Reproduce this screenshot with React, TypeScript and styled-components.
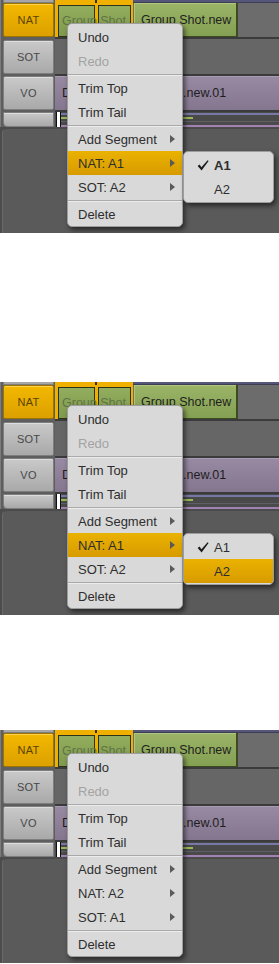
import React from "react";
import styled, { createGlobalStyle, css } from "styled-components";

const Global = createGlobalStyle`
  html, body { margin: 0; padding: 0; background: #ffffff; }
  body { font-family: "Liberation Sans", Arial, sans-serif; width: 279px; }
  * { box-sizing: border-box; }
`;

const Stack = styled.div`
  display: flex;
  flex-direction: column;
  width: 279px;
`;

const Panel = styled.section<{ $gap: number }>`
  position: relative;
  width: 279px;
  height: 233px;
  margin-top: ${(p) => p.$gap}px;
  background: #4c4c4c;
  overflow: hidden;
  display: flex;
  flex-direction: column;
`;

const Row = styled.div<{ $h: number }>`
  display: flex;
  height: ${(p) => p.$h}px;
  flex: none;
`;

const LabelCell = styled.div`
  width: 55px;
  flex: none;
  padding: 0 1px 0 2px;
  background: #5e5e5e;
  border-left: 1px solid #7c7c7c;
`;

const LabelButton = styled.div<{ $active?: boolean; $h: number; $mt?: number; $bottom?: boolean }>`
  height: ${(p) => p.$h}px;
  margin-top: ${(p) => p.$mt ?? 0}px;
  border-radius: ${(p) => (p.$bottom ? "0 0 0 4px" : "2px")};
  display: flex;
  align-items: center;
  justify-content: center;
  font-size: 11px;
  letter-spacing: 0.2px;
  ${(p) =>
    p.$active
      ? css`
          background: linear-gradient(#f3b800, #dca000);
          border: 1px solid #9c7400;
          box-shadow: inset 0 1px 0 #ffd24a;
          color: #5a4300;
        `
      : css`
          background: linear-gradient(#c9c9c9, #a9a9a9);
          border: 1px solid #7e7e7e;
          box-shadow: inset 0 1px 0 #dedede;
          color: #474747;
        `}
`;

const StripLabel = styled.div`
  height: 3px;
  background: #a6a6a6;
  border: 1px solid #7e7e7e;
  border-top: none;
`;

const TrackCell = styled.div<{ $bg: string; $sep?: boolean }>`
  flex: 1;
  display: flex;
  background: ${(p) => p.$bg};
  border-bottom: ${(p) => (p.$sep ? "2px solid #3b3b3b" : "none")};
  min-width: 0;
  overflow: hidden;
`;

const StripSel = styled.div`
  width: 78px;
  height: 3px;
  background: #f0b000;
  display: flex;
  justify-content: flex-start;
`;

const StripCut = styled.div`
  width: 2px;
  height: 3px;
  margin-left: 40px;
  background: #3a3000;
`;

const StripRest = styled.div`
  flex: 1;
  background: #56567a;
  border-bottom: 1px solid #3d3d55;
`;

const SelGroup = styled.div`
  width: 78px;
  flex: none;
  display: grid;
  grid-template-columns: 42px 36px;
  grid-template-rows: 34px;
  background: #f0b000;
`;

const SelClip = styled.div<{ $col: number }>`
  grid-row: 1;
  grid-column: ${(p) => p.$col};
  margin: 2px 2px 0 ${(p) => (p.$col === 1 ? 3 : 1)}px;
  background: linear-gradient(#93ad5e, #7f9a4c);
  border: 1px solid #2c3318;
`;

const SelText = styled.div`
  grid-row: 1;
  grid-column: 1 / span 2;
  z-index: 1;
  padding-left: 7px;
  padding-top: 2px;
  line-height: 32px;
  font-size: 12.5px;
  color: #5f7446;
  white-space: nowrap;
  overflow: hidden;
`;

const Clip = styled.div<{ $w: number; $color: "green" | "purple" }>`
  width: ${(p) => p.$w}px;
  flex: none;
  padding-left: 7px;
  font-size: 12.5px;
  line-height: 34px;
  white-space: nowrap;
  overflow: hidden;
  color: #1e1e1e;
  ${(p) =>
    p.$color === "green"
      ? css`
          margin-left: 1px;
          background: linear-gradient(#9bb468, #84a052);
          border-right: 2px solid #3e4a22;
          border-bottom: 1px solid #3e4a22;
          box-shadow: inset 1px 1px 0 #b0c680;
        `
      : css`
          background: linear-gradient(#978aa2, #85768f);
          box-shadow: inset 0 1px 0 #a89cb2;
        `}
`;

const VoText = styled.span`
  margin-left: 112px;
`;

const Lines = styled.div`
  flex: 1;
  display: flex;
  background: #4a4a4a;
`;

const Marker = styled.div`
  width: 5px;
  margin-left: 1px;
  background: #ffffff;
  border-left: 1px solid #111;
  border-right: 1px solid #111;
  flex: none;
`;

const LineStack = styled.div`
  flex: 1;
  display: flex;
  flex-direction: column;
  padding-top: 1px;
`;

const Line = styled.div<{ $c: string; $w?: number; $mt: number; $h?: number }>`
  height: ${(p) => p.$h ?? 2}px;
  width: ${(p) => (p.$w ? `${p.$w}px` : "100%")};
  margin-top: ${(p) => p.$mt}px;
  background: ${(p) => p.$c};
  flex: none;
`;

const DarkArea = styled.div`
  flex: 1;
  margin-top: 1px;
  margin-left: 2px;
  background: #5a5a5a;
  border-top-left-radius: 5px;
  border-left: 1px solid #6a6a6a;
  border-top: 1px solid #4a4a4a;
`;

const Menu = styled.div`
  position: absolute;
  left: 67px;
  top: 23px;
  width: 116px;
  padding-top: 1px;
  background: #d9d9d9;
  border: 1px solid #9d9d9d;
  border-radius: 5px;
  box-shadow: 2px 3px 5px rgba(0, 0, 0, 0.55);
  z-index: 5;
  overflow: hidden;
`;

const Item = styled.div<{ $disabled?: boolean; $hl?: boolean; $bold?: boolean; $pl?: number }>`
  height: 24px;
  display: flex;
  align-items: center;
  padding-left: ${(p) => p.$pl ?? 10}px;
  padding-right: 7px;
  font-size: 13px;
  font-weight: ${(p) => (p.$bold ? 700 : 400)};
  color: ${(p) => (p.$disabled ? "#a3a3a3" : "#2e2e2e")};
  background: ${(p) => (p.$hl ? "linear-gradient(#eab200, #d79b00)" : "transparent")};
  white-space: nowrap;
`;

const ItemLabel = styled.span`
  flex: 1;
`;

const Sep = styled.div`
  height: 3px;
  border-top: 1px solid transparent;
  display: flex;
  flex-direction: column;
  &::before {
    content: "";
    height: 1px;
    background: #a9a9a9;
  }
  &::after {
    content: "";
    height: 1px;
    background: #ececec;
  }
`;

const SubMenu = styled.div`
  position: absolute;
  left: 183px;
  top: 151px;
  width: 91px;
  padding: 1px 0;
  background: #d9d9d9;
  border: 1px solid #9d9d9d;
  border-radius: 5px;
  box-shadow: 2px 3px 5px rgba(0, 0, 0, 0.55);
  z-index: 6;
  overflow: hidden;
`;

const CheckSlot = styled.span`
  width: 17px;
  margin-left: -17px;
  display: flex;
  align-items: center;
`;

const Arrow = () => (
  <svg width="5" height="8" viewBox="0 0 5 8">
    <path d="M0 0 L5 4 L0 8 Z" fill="#5a5a5a" />
  </svg>
);

const Check = () => (
  <svg width="12" height="11" viewBox="0 0 12 11">
    <path d="M0.6 6 L2.6 4.6 L4.4 7.2 L10.6 0.3 L11.6 1 L4.6 10.6 Z" fill="#1c1c1c" />
  </svg>
);

type PanelData = {
  gap: number;
  nat: string;
  sot: string;
  natHl: boolean;
  sub: null | { hl: string | null; boldChecked: boolean };
};

const panels: PanelData[] = [
  { gap: 0, nat: "A1", sot: "A2", natHl: true, sub: { hl: null, boldChecked: true } },
  { gap: 149, nat: "A1", sot: "A2", natHl: true, sub: { hl: "A2", boldChecked: false } },
  { gap: 115, nat: "A2", sot: "A1", natHl: false, sub: null },
];

const TimelinePanel: React.FC<{ d: PanelData }> = ({ d }) => (
  <Panel $gap={d.gap}>
    <Row $h={3}>
      <LabelCell>
        <StripLabel />
      </LabelCell>
      <TrackCell $bg="#56567a">
        <StripSel>
          <StripCut />
        </StripSel>
        <StripRest />
      </TrackCell>
    </Row>
    <Row $h={36}>
      <LabelCell>
        <LabelButton $active $h={34}>NAT</LabelButton>
      </LabelCell>
      <TrackCell $bg="#6c6c6c" $sep>
        <SelGroup>
          <SelClip $col={1} />
          <SelClip $col={2} />
          <SelText>Group Shot</SelText>
        </SelGroup>
        <Clip $w={104} $color="green">Group Shot.new</Clip>
      </TrackCell>
    </Row>
    <Row $h={37}>
      <LabelCell>
        <LabelButton $h={34} $mt={1}>SOT</LabelButton>
      </LabelCell>
      <TrackCell $bg="#666666" $sep />
    </Row>
    <Row $h={36}>
      <LabelCell>
        <LabelButton $h={34}>VO</LabelButton>
      </LabelCell>
      <TrackCell $bg="#4a4a4a" $sep>
        <Clip $w={224} $color="purple">
          D<VoText>.new.01</VoText>
        </Clip>
      </TrackCell>
    </Row>
    <Row $h={15}>
      <LabelCell>
        <LabelButton $h={15} $bottom />
      </LabelCell>
      <Lines>
        <Marker />
        <LineStack>
          <Line $c="#7878a6" $mt={0} />
          <Line $c="#9ab85a" $w={132} $mt={2} />
          <Line $c="#5e5e66" $mt={2} $h={1} />
          <Line $c="#a282b2" $mt={3} />
        </LineStack>
      </Lines>
    </Row>
    <DarkArea />

    <Menu>
      <Item>Undo</Item>
      <Item $disabled>Redo</Item>
      <Sep />
      <Item>Trim Top</Item>
      <Item>Trim Tail</Item>
      <Sep />
      <Item>
        <ItemLabel>Add Segment</ItemLabel>
        <Arrow />
      </Item>
      <Item $hl={d.natHl}>
        <ItemLabel>NAT: {d.nat}</ItemLabel>
        <Arrow />
      </Item>
      <Item>
        <ItemLabel>SOT: {d.sot}</ItemLabel>
        <Arrow />
      </Item>
      <Sep />
      <Item>Delete</Item>
    </Menu>

    {d.sub && (
      <SubMenu>
        <Item $pl={30} $bold={d.sub.boldChecked}>
          <CheckSlot>
            <Check />
          </CheckSlot>
          A1
        </Item>
        <Item $pl={30} $hl={d.sub.hl === "A2"}>
          A2
        </Item>
      </SubMenu>
    )}
  </Panel>
);

export default function App() {
  return (
    <>
      <Global />
      <Stack>
        {panels.map((d, i) => (
          <TimelinePanel key={i} d={d} />
        ))}
      </Stack>
    </>
  );
}
